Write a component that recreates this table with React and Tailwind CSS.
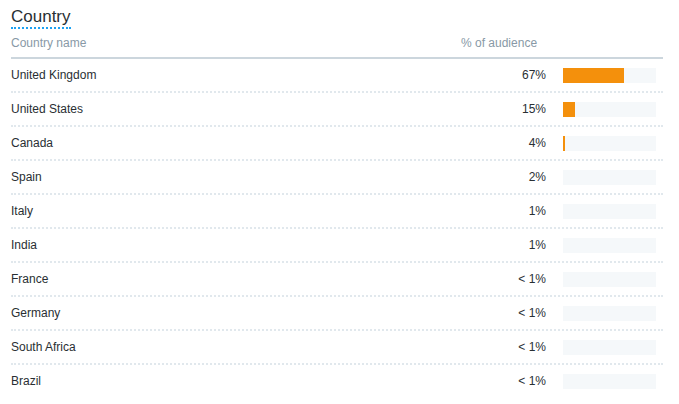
import React from "react";

const rows = [
    { name: "United Kingdom", pct: "67%", bar: 61 },
    { name: "United States", pct: "15%", bar: 12 },
    { name: "Canada", pct: "4%", bar: 2 },
    { name: "Spain", pct: "2%", bar: 0 },
    { name: "Italy", pct: "1%", bar: 0 },
    { name: "India", pct: "1%", bar: 0 },
    { name: "France", pct: "< 1%", bar: 0 },
    { name: "Germany", pct: "< 1%", bar: 0 },
    { name: "South Africa", pct: "< 1%", bar: 0 },
    { name: "Brazil", pct: "< 1%", bar: 0 },
];

const App = () => {
    return (
        <div className="w-[679px] h-[404px] bg-white overflow-hidden font-['Liberation_Sans',Arial,sans-serif] text-[#292f33]">
            <div className="ml-[11px] mr-[16px] pt-[7px]">
                <div className="flex">
                    <h2 className="text-[17px] leading-[20px] border-b-2 border-dotted border-[#1da1f2]">Country</h2>
                </div>

                <div className="flex items-center pt-[6px] pb-[6px] border-b-2 border-[#ccd6dd] text-[12px] leading-[16px] text-[#8899a6]">
                    <div className="flex-1">Country name</div>
                    <div className="w-[85px]">% of audience</div>
                    <div className="w-[117px]"></div>
                </div>

                {rows.map((row, i) => (
                    <div
                        key={row.name}
                        className={
                            i < rows.length - 1
                                ? "flex items-center h-[34px] border-b-2 border-dotted border-[#e1e8ed] text-[12px] leading-[16px]"
                                : "flex items-center h-[32px] text-[12px] leading-[16px]"
                        }
                    >
                        <div className="flex-1">{row.name}</div>
                        <div className="w-[85px] text-right">{row.pct}</div>
                        <div className="ml-[17px] w-[93px] h-[15px] bg-[#f5f8fa] flex">
                            <div className="h-full bg-[#f4900c]" style={{ width: row.bar }}></div>
                        </div>
                        <div className="w-[7px]"></div>
                    </div>
                ))}
            </div>
        </div>
    );
};

export default App;
